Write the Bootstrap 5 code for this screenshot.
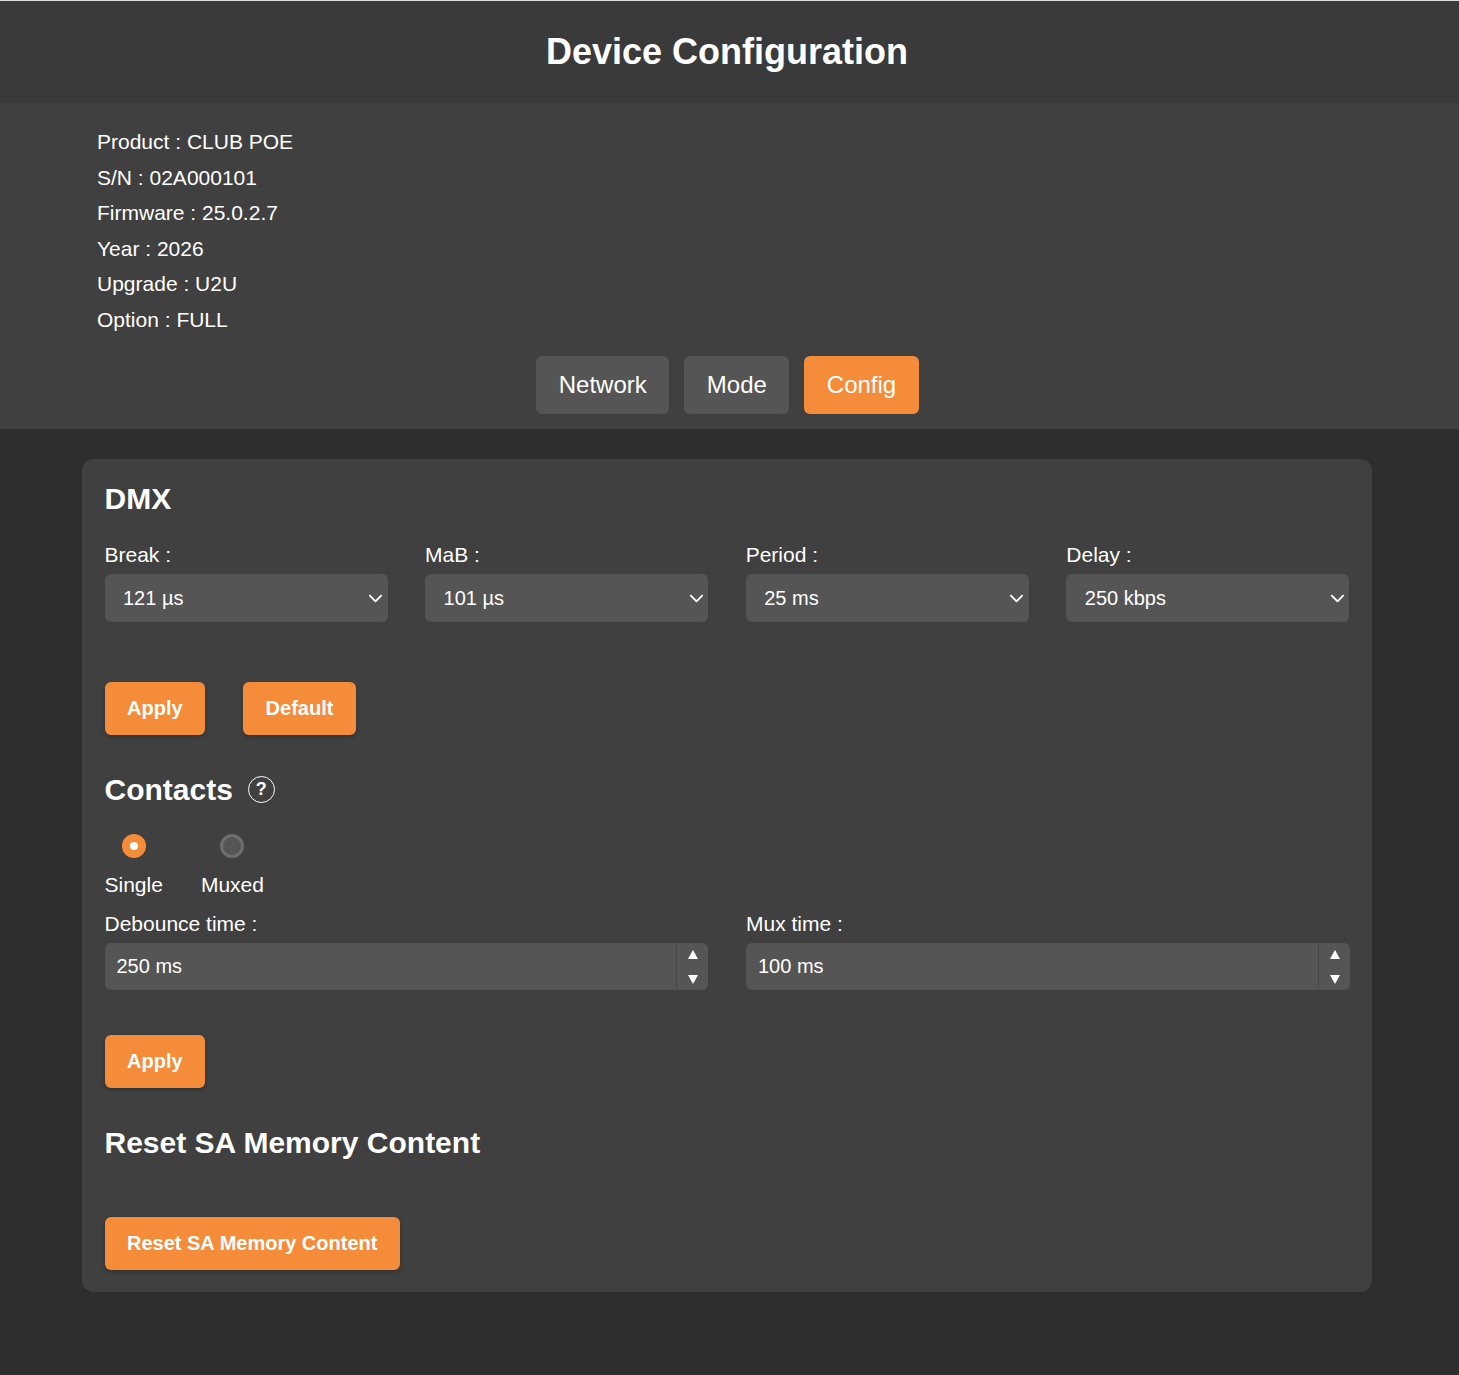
<!DOCTYPE html>
<html lang="en"><head><meta charset="utf-8"><title>Device Configuration</title>
<link href="https://cdn.jsdelivr.net/npm/bootstrap@5.3.0/dist/css/bootstrap.min.css" rel="stylesheet">
<style>
html,body{background:#2e2e2e;}
body{font-family:"Liberation Sans",Arial,sans-serif;color:#fff;min-height:1375px;font-size:21px;}
.hdr{height:103px;background:#3a3a3a;border-top:1px solid #ddd;display:flex;align-items:center;justify-content:center;padding-bottom:1px;}
.hdr h1{font-size:36px;font-weight:700;margin:0;line-height:1;padding-right:5px;}
.infobar{background:#404040;height:326px;padding:21px 97px 0;}
.infobar p{margin:0;line-height:35.6px;}
.tabset{margin-top:18px;gap:15px;padding-right:4px;}
.tabbtn,.tabbtn:hover{height:58px;padding:0 22.5px;font-size:24px;background:#555;color:#fff;border:0;border-radius:6px;}
.tabbtn.on,.tabbtn.on:hover{background:#f58c3a;color:#fff;}
.panelbox{background:#404040;border-radius:12px;margin:30px 87px 0 82px;height:833px;padding:22px 22.5px;}
.ttl{font-size:30px;font-weight:700;margin:0;line-height:36px;}
.lbl{display:block;line-height:24px;margin-bottom:7px;}
.sel{height:48px;background-color:#555;border:0;border-radius:6px;color:#fff;font-size:20px;padding:0 18.5px;box-shadow:none;
background-image:url("data:image/svg+xml,%3csvg xmlns='http://www.w3.org/2000/svg' viewBox='0 0 16 16'%3e%3cpath fill='none' stroke='%23fff' stroke-linecap='round' stroke-linejoin='round' stroke-width='2' d='m2 5 6 6 6-6'/%3e%3c/svg%3e");background-position:right 4.5px center;background-size:15px 15px;}
.selgrid{display:grid;grid-template-columns:283px 283px 283px 283.2px;column-gap:37.6px;margin-top:26px;}
.orbtn,.orbtn:hover{height:53px;background:#f58c3a;color:#fff;font-weight:700;font-size:20px;border:0;border-radius:6px;padding:0 22.5px 1px;box-shadow:0 2px 5px rgba(0,0,0,.25);}
.rad{width:24px;height:24px;border-radius:50%;display:block;margin:0 auto 11px;}
.rad.on{background:#f58c3a;position:relative;}
.rad.on::after{content:"";position:absolute;left:8px;top:8px;width:8px;height:8px;border-radius:50%;background:#fff;}
.rad.off{background:#555;border:3px solid #6e6e6e;}
.two{display:grid;grid-template-columns:603px 603.5px;column-gap:38.5px;}
.numbox{height:47px;background:#555;border-radius:6px;display:flex;align-items:center;padding-left:12px;position:relative;font-size:20px;}
.spin{position:absolute;right:0;top:0;bottom:0;width:32px;border-left:1px solid #484848;display:flex;flex-direction:column;align-items:center;justify-content:center;gap:16px;padding:1px 0 0 1px;}
.spin svg{display:block;width:10px;height:9px;fill:#fff;}
.qmark{width:27px;height:27px;border:1.5px solid #fff;border-radius:50%;display:inline-flex;align-items:center;justify-content:center;font-size:18px;font-weight:700;margin:0 0 2px 15px;}
</style></head><body>
<header class="hdr"><h1>Device Configuration</h1></header>
<section class="infobar">
<p>Product : CLUB POE</p><p>S/N : 02A000101</p><p>Firmware : 25.0.2.7</p><p>Year : 2026</p><p>Upgrade : U2U</p><p>Option : FULL</p>
<div class="d-flex justify-content-center tabset"><button class="btn tabbtn">Network</button><button class="btn tabbtn">Mode</button><button class="btn tabbtn on">Config</button></div>
</section>
<main class="panelbox">
<h2 class="ttl">DMX</h2>
<div class="selgrid">
<div><label class="lbl">Break :</label><select class="form-select sel"><option>121 µs</option></select></div>
<div><label class="lbl">MaB :</label><select class="form-select sel"><option>101 µs</option></select></div>
<div><label class="lbl">Period :</label><select class="form-select sel"><option>25 ms</option></select></div>
<div><label class="lbl">Delay :</label><select class="form-select sel"><option>250 kbps</option></select></div>
</div>
<div class="d-flex" style="gap:38px;margin-top:60px"><button class="btn orbtn">Apply</button><button class="btn orbtn">Default</button></div>
<div class="d-flex align-items-center" style="margin-top:37px"><h2 class="ttl">Contacts</h2><span class="qmark">?</span></div>
<div class="d-flex" style="gap:38px;margin-top:26px"><div class="text-center"><span class="rad on"></span>Single</div><div class="text-center"><span class="rad off"></span>Muxed</div></div>
<div class="two" style="margin-top:11px">
<div><label class="lbl">Debounce time :</label><div class="numbox">250 ms<div class="spin"><svg viewBox="0 0 10 9"><polygon points="5,0 10,9 0,9"/></svg><svg viewBox="0 0 10 9"><polygon points="0,0 10,0 5,9"/></svg></div></div></div>
<div><label class="lbl">Mux time :</label><div class="numbox">100 ms<div class="spin"><svg viewBox="0 0 10 9"><polygon points="5,0 10,9 0,9"/></svg><svg viewBox="0 0 10 9"><polygon points="0,0 10,0 5,9"/></svg></div></div></div>
</div>
<div style="margin-top:45px"><button class="btn orbtn">Apply</button></div>
<h2 class="ttl" style="margin-top:37px">Reset SA Memory Content</h2>
<div style="margin-top:56px"><button class="btn orbtn">Reset SA Memory Content</button></div>
</main>
<script src="https://cdn.jsdelivr.net/npm/bootstrap@5.3.0/dist/js/bootstrap.bundle.min.js"></script>
</body></html>
